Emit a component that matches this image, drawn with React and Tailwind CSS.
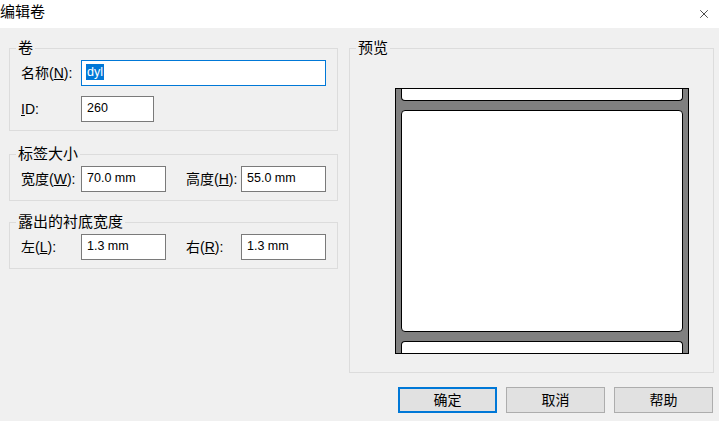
import { X } from 'lucide-react'

function Group({ label, className = '', children }) {
  return (
    <fieldset className={`border border-[#dcdcdc] ${className}`}>
      <legend className="ml-[6px] px-[2px] text-[15px] leading-[18px]">{label}</legend>
      {children}
    </fieldset>
  )
}

function Field({ value, className = '', focused = false }) {
  return (
    <div
      className={`flex h-[26px] items-center bg-white pb-[2px] text-[12.5px] leading-[15px] ${
        focused ? 'border border-[#0078d7] pl-[4px]' : 'border border-[#7a7a7a] pl-[5px]'
      } ${className}`}
    >
      {focused ? <span className="bg-[#0078d7] px-[1px] leading-[16px] text-white">{value}</span> : value}
    </div>
  )
}

function Label({ text, keyChar, className = '' }) {
  return (
    <span className={`text-[14px] leading-[18px] ${className}`}>
      {text}(<u>{keyChar}</u>):
    </span>
  )
}

export default function App() {
  return (
    <div className="flex h-[421px] w-[723px] flex-col bg-white text-black font-['Liberation_Sans','Noto_Sans_CJK_SC',sans-serif]">
      <div className="flex h-[28px] shrink-0 items-start justify-between">
        <span className="pt-[3px] text-[15px] leading-[18px]">编辑卷</span>
        <X className="mr-[12px] mt-[7px] h-[14px] w-[14px]" strokeWidth={1.2} />
      </div>

      <div className="flex w-[719px] flex-1 gap-[11px] bg-[#f0f0f0] pl-[9px] pt-[11px]">
        {/* left column */}
        <div className="flex w-[329px] flex-col">
          <Group label="卷">
            <div className="px-[11px] pb-[8px] pt-[3px]">
              <div className="flex h-[26px] items-center">
                <Label text="名称" keyChar="N" className="w-[60px]" />
                <Field value="dyl" focused className="flex-1" />
              </div>
              <div className="mt-[10px] flex h-[26px] items-center">
                <span className="w-[60px] text-[14px] leading-[18px]">
                  <u>I</u>D:
                </span>
                <Field value="260" className="w-[73px]" />
              </div>
            </div>
          </Group>

          <Group label="标签大小" className="mt-[14px]">
            <div className="flex h-[26px] items-center px-[11px] pb-[8px] pt-[3px] box-content">
              <Label text="宽度" keyChar="W" className="w-[60px]" />
              <Field value="70.0 mm" className="w-[85px]" />
              <Label text="高度" keyChar="H" className="ml-[20px] w-[55px]" />
              <Field value="55.0 mm" className="w-[85px]" />
            </div>
          </Group>

          <Group label="露出的衬底宽度" className="mt-[12px]">
            <div className="flex h-[26px] items-center px-[11px] pb-[8px] pt-[3px] box-content">
              <Label text="左" keyChar="L" className="w-[60px]" />
              <Field value="1.3 mm" className="w-[85px]" />
              <Label text="右" keyChar="R" className="ml-[20px] w-[55px]" />
              <Field value="1.3 mm" className="w-[85px]" />
            </div>
          </Group>
        </div>

        {/* right column */}
        <div className="flex w-[365px] flex-col">
          <Group label="预览" className="h-[334px]">
            <div className="pl-[45px] pt-[31px]">
              <div className="flex w-[294px] flex-col border border-black bg-[#808080] px-[5px]">
                <div className="h-[12px] rounded-b-[4px] border-x border-b border-black bg-white" />
                <div className="mt-[9px] h-[222px] rounded-[4px] border border-black bg-white" />
                <div className="mt-[9px] h-[12px] rounded-t-[4px] border-x border-t border-black bg-white" />
              </div>
            </div>
          </Group>

          <div className="mr-[1px] mt-[14px] flex justify-end gap-[9px]">
            <button className="h-[26px] w-[99px] border-2 border-[#0078d7] bg-[#e1e1e1] text-[14px] leading-[18px]">
              确定
            </button>
            <button className="h-[26px] w-[99px] border border-[#adadad] bg-[#e1e1e1] text-[14px] leading-[18px]">
              取消
            </button>
            <button className="h-[26px] w-[99px] border border-[#adadad] bg-[#e1e1e1] text-[14px] leading-[18px]">
              帮助
            </button>
          </div>
        </div>
      </div>
    </div>
  )
}
